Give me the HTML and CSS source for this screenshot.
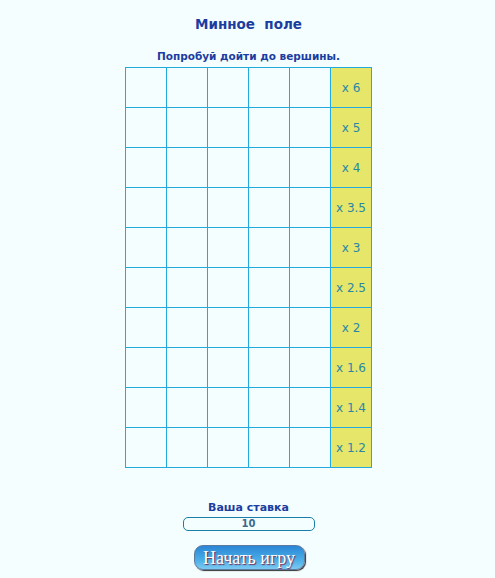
FILE: index.html
```html
<!DOCTYPE html>
<html lang="ru">
<head>
<meta charset="utf-8">
<title>Минное поле</title>
<link rel="stylesheet" href="styles.css">
</head>
<body>
<div class="page">
  <h1 class="title">Минное&nbsp; поле</h1>
  <p class="subtitle">Попробуй дойти до вершины.</p>
  <div class="board">
    <div class="cell"></div><div class="cell"></div><div class="cell"></div><div class="cell"></div><div class="cell"></div><div class="cell mult">x 6</div>
    <div class="cell"></div><div class="cell"></div><div class="cell"></div><div class="cell"></div><div class="cell"></div><div class="cell mult">x 5</div>
    <div class="cell"></div><div class="cell"></div><div class="cell"></div><div class="cell"></div><div class="cell"></div><div class="cell mult">x 4</div>
    <div class="cell"></div><div class="cell"></div><div class="cell"></div><div class="cell"></div><div class="cell"></div><div class="cell mult">x 3.5</div>
    <div class="cell"></div><div class="cell"></div><div class="cell"></div><div class="cell"></div><div class="cell"></div><div class="cell mult">x 3</div>
    <div class="cell"></div><div class="cell"></div><div class="cell"></div><div class="cell"></div><div class="cell"></div><div class="cell mult">x 2.5</div>
    <div class="cell"></div><div class="cell"></div><div class="cell"></div><div class="cell"></div><div class="cell"></div><div class="cell mult">x 2</div>
    <div class="cell"></div><div class="cell"></div><div class="cell"></div><div class="cell"></div><div class="cell"></div><div class="cell mult">x 1.6</div>
    <div class="cell"></div><div class="cell"></div><div class="cell"></div><div class="cell"></div><div class="cell"></div><div class="cell mult">x 1.4</div>
    <div class="cell"></div><div class="cell"></div><div class="cell"></div><div class="cell"></div><div class="cell"></div><div class="cell mult">x 1.2</div>
  </div>
  <div class="bet">
    <div class="bet-label">Ваша ставка</div>
    <div class="bet-input">10</div>
  </div>
  <button class="start">Начать игру</button>
</div>
</body>
</html>
```
FILE: styles.css
```css
html, body {
  margin: 0;
  padding: 0;
  background: #f5fefe;
}
.page {
  width: 495px;
  height: 578px;
  display: flex;
  flex-direction: column;
  align-items: center;
  padding-left: 2px;
  box-sizing: border-box;
  font-family: "DejaVu Sans", Verdana, sans-serif;
}
.title {
  margin: 15px 0 0;
  font-size: 13.5px;
  line-height: 18px;
  font-weight: bold;
  color: #1c3da0;
}
.subtitle {
  margin: 17px 0 0;
  font-size: 10.5px;
  line-height: 13px;
  font-weight: bold;
  color: #1c3da0;
}
.board {
  margin-top: 4px;
  display: grid;
  grid-template-columns: repeat(6, 41px);
  grid-auto-rows: 40px;
  border-top: 1px solid #22aadd;
  border-left: 1px solid #22aadd;
}
.cell {
  background: #f5fefe;
  border-right: 1px solid #22aadd;
  border-bottom: 1px solid #22aadd;
}
.cell.mult {
  background: #e6e66a;
  color: #2a86a6;
  font-size: 12px;
  display: flex;
  align-items: center;
  justify-content: center;
}
.bet {
  margin-top: 33px;
  display: flex;
  flex-direction: column;
  align-items: center;
}
.bet-label {
  font-size: 11px;
  line-height: 13px;
  font-weight: bold;
  color: #1c3da0;
}
.bet-input {
  margin-top: 3px;
  width: 130px;
  height: 12px;
  border: 1px solid #1a7fa8;
  border-radius: 5px;
  font-size: 10px;
  line-height: 12px;
  font-weight: bold;
  color: #3a6a8e;
  text-align: center;
}
.start {
  margin-top: 14px;
  margin-left: 1px;
  width: 111px;
  height: 25px;
  padding: 0;
  border: 1px solid #5a7aa0;
  border-radius: 9px;
  background: linear-gradient(#2a86d6, #4aaee6 60%, #7ccaf2);
  box-shadow: 1px 1px 1px #333;
  font-family: "Liberation Serif", "Times New Roman", serif;
  font-size: 18px;
  line-height: 22px;
  color: #fff;
  text-shadow: 1px 1px 1px #7a2a5a;
}
```
